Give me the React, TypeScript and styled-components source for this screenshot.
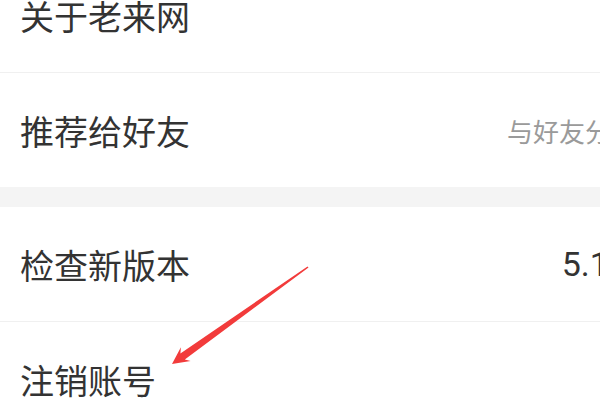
import React from 'react';
import styled, { createGlobalStyle } from 'styled-components';

interface SettingItem {
  label: string;
  value?: string;
  muted?: boolean;
}

const groups: SettingItem[][] = [
  [
    { label: '关于老来网' },
    { label: '推荐给好友', value: '与好友分享', muted: true },
  ],
  [
    { label: '检查新版本', value: '5.1.0' },
    { label: '注销账号' },
  ],
];

const GlobalStyle = createGlobalStyle`
  html, body {
    margin: 0;
    padding: 0;
    background: #ffffff;
    overflow: hidden;
  }
  body {
    font-family: Roboto, "Noto Sans CJK SC", sans-serif;
  }
`;

const App: React.FC = () => (
  <>
    <GlobalStyle />
    <Screen>
      <List>
        {groups.map((group, gi) => (
          <Group key={gi}>
            {group.map((item, i) => (
              <Row key={item.label} last={i === group.length - 1}>
                <Label>{item.label}</Label>
                {item.value && <Value muted={!!item.muted}>{item.value}</Value>}
              </Row>
            ))}
          </Group>
        ))}
      </List>
      {/* red annotation arrow drawn over the list */}
      <Arrow viewBox="0 0 600 400" width="600" height="400">
        <polygon
          points="172,364 190.6,361 184.8,359.4 308.5,267.5 307.5,266.5 180.4,353.4 180.9,347.2"
          fill="#f23b3b"
        />
      </Arrow>
    </Screen>
  </>
);

const Screen = styled.div`
  position: relative;
  width: 600px;
  height: 400px;
  overflow: hidden;
  background: #ffffff;
`;

const List = styled.div`
  display: flex;
  flex-direction: column;
  gap: 20px;
  margin-top: -42px;
  background: #f4f4f4;
`;

const Group = styled.div`
  display: flex;
  flex-direction: column;
  background: #ffffff;
`;

const Row = styled.div<{ last: boolean }>`
  display: flex;
  align-items: center;
  justify-content: space-between;
  height: 114px;
  padding: 0 20px;
  border-bottom: ${(p) => (p.last ? 'none' : '1px solid #f0f0f0')};
  white-space: nowrap;
`;

const Label = styled.span`
  font-family: "Noto Sans CJK SC", sans-serif;
  font-size: 34px;
  color: #333333;
`;

const Value = styled.span<{ muted: boolean }>`
  font-size: ${(p) => (p.muted ? '26px' : '34px')};
  color: ${(p) => (p.muted ? '#9a9a9a' : '#333333')};
  font-family: ${(p) => (p.muted ? '"Noto Sans CJK SC", sans-serif' : 'Roboto, sans-serif')};
  margin-right: -57px;
`;

const Arrow = styled.svg`
  position: absolute;
  left: 0;
  top: 0;
  pointer-events: none;
`;

export default App;
